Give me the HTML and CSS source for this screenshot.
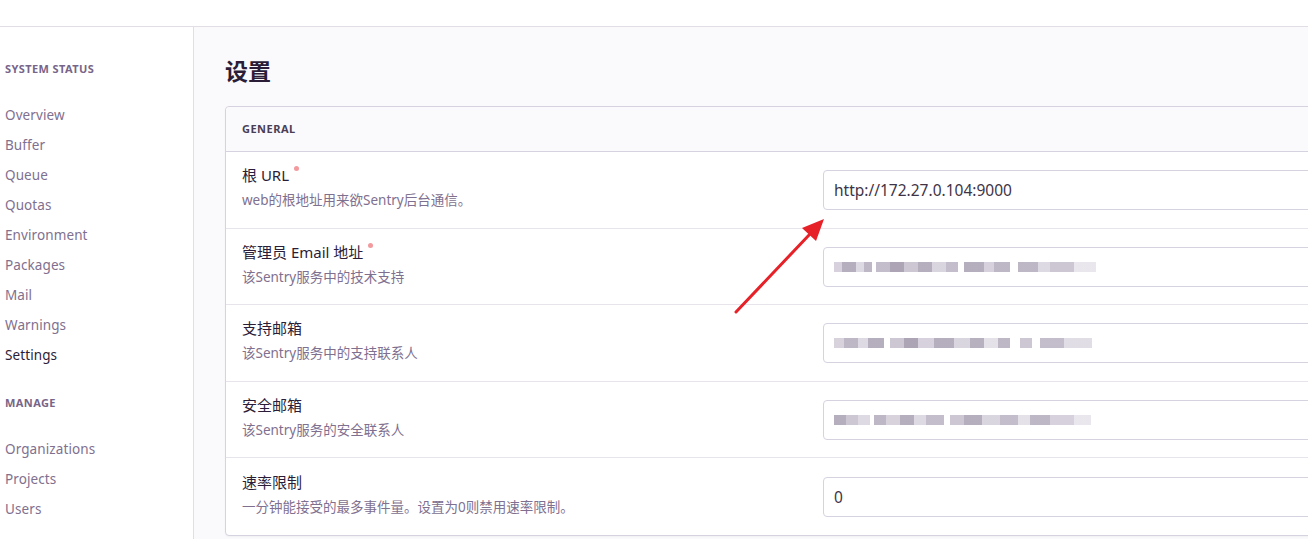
FILE: index.html
```html
<!DOCTYPE html>
<html lang="zh-CN">
  <head>
    <meta charset="UTF-8" />
    <title>设置</title>
    <link rel="stylesheet" href="styles.css">
  </head>
  <body>
    <div class="topbar"></div>

    <div class="layout">
      <!-- Sidebar -->
      <nav class="sidebar">
        <h6 class="nav-heading">System Status</h6>
        <a class="nav-item">Overview</a>
        <a class="nav-item">Buffer</a>
        <a class="nav-item">Queue</a>
        <a class="nav-item">Quotas</a>
        <a class="nav-item">Environment</a>
        <a class="nav-item">Packages</a>
        <a class="nav-item">Mail</a>
        <a class="nav-item">Warnings</a>
        <a class="nav-item active">Settings</a>

        <h6 class="nav-heading manage">Manage</h6>
        <a class="nav-item">Organizations</a>
        <a class="nav-item">Projects</a>
        <a class="nav-item">Users</a>
      </nav>

      <!-- Content -->
      <main class="content">
        <h1 class="page-title">设置</h1>

        <div class="panel">
          <div class="panel-header">General</div>

          <div class="field">
            <div class="field-label">
              <div class="label">根 URL <span class="required"></span></div>
              <div class="help">web的根地址用来欲Sentry后台通信。</div>
            </div>
            <div class="field-control">
              <div class="input">http://172.27.0.104:9000</div>
            </div>
          </div>

          <div class="field">
            <div class="field-label">
              <div class="label">管理员 Email 地址 <span class="required"></span></div>
              <div class="help">该Sentry服务中的技术支持</div>
            </div>
            <div class="field-control">
              <div class="input"><span class="mosaic m1"></span></div>
            </div>
          </div>

          <div class="field">
            <div class="field-label">
              <div class="label">支持邮箱</div>
              <div class="help">该Sentry服务中的支持联系人</div>
            </div>
            <div class="field-control">
              <div class="input"><span class="mosaic m2"></span></div>
            </div>
          </div>

          <div class="field">
            <div class="field-label">
              <div class="label">安全邮箱</div>
              <div class="help">该Sentry服务的安全联系人</div>
            </div>
            <div class="field-control">
              <div class="input"><span class="mosaic m3"></span></div>
            </div>
          </div>

          <div class="field">
            <div class="field-label">
              <div class="label">速率限制</div>
              <div class="help">一分钟能接受的最多事件量。设置为0则禁用速率限制。</div>
            </div>
            <div class="field-control">
              <div class="input">0</div>
            </div>
          </div>
        </div>
      </main>
    </div>

    <!-- annotation arrow -->
    <svg class="arrow" width="110" height="110" viewBox="0 0 110 110">
      <line x1="6" y1="102" x2="80" y2="24" stroke="#e62128" stroke-width="3" stroke-linecap="round" />
      <polygon points="94,9 72,18 86,31" fill="#e62128" />
    </svg>
  </body>
</html>
```

FILE: styles.css
```css
body {
  margin: 0;
  font-family: "Noto Sans", "Noto Sans CJK SC", sans-serif;
  color: #2b1d38;
  background: #faf9fb;
  overflow: hidden;
}

.topbar {
  height: 26px;
  background: #fff;
  border-bottom: 1px solid #e2dee6;
}

.layout {
  display: flex;
  min-height: 512px;
}

/* Sidebar */
.sidebar {
  width: 194px;
  flex-shrink: 0;
  background: #fff;
  border-right: 1px solid #e2dee6;
  padding: 34px 0 0 5px;
  box-sizing: border-box;
  display: flex;
  flex-direction: column;
}

.nav-heading {
  margin: 0 0 28px;
  font-size: 11px;
  letter-spacing: 0.4px;
  font-weight: 700;
  text-transform: uppercase;
  color: #776589;
  line-height: 16px;
}

.nav-heading.manage {
  margin-top: 20px;
}

.nav-item {
  font-size: 13.5px;
  letter-spacing: 0.1px;
  line-height: 20px;
  height: 30px;
  color: #80708f;
}

.nav-item.active {
  color: #2b1d38;
}

/* Content */
.content {
  flex: 1;
  padding: 30px 0 0 31px;
  min-width: 0;
}

.page-title {
  margin: 0 0 21px;
  font-size: 23px;
  line-height: 28px;
  font-weight: 700;
  color: #2b1d38;
}

.panel {
  width: 1200px;
  background: #fff;
  border: 1px solid #d6d2e0;
  border-radius: 4px;
  box-shadow: 0 1px 2px rgba(0, 0, 0, 0.04);
}

.panel-header {
  height: 44px;
  line-height: 44px;
  padding-left: 16px;
  background: #faf9fb;
  border-bottom: 1px solid #d6d2e0;
  border-radius: 4px 4px 0 0;
  font-size: 11px;
  letter-spacing: 0.5px;
  font-weight: 700;
  text-transform: uppercase;
  color: #4a3e56;
}

.field {
  display: flex;
  align-items: center;
  height: 76.6px;
  box-sizing: border-box;
  border-bottom: 1px solid #e7e4ec;
}

.field:last-child {
  border-bottom: none;
}

.field-label {
  width: 597px;
  flex-shrink: 0;
  padding: 0 0 5px 16px;
  box-sizing: border-box;
}

.label {
  font-size: 15px;
  line-height: 20px;
  color: #2b1d38;
}

.required {
  display: inline-block;
  width: 5px;
  height: 5px;
  margin-left: 1px;
  border-radius: 50%;
  background: #f39a9d;
  vertical-align: 10px;
}

.help {
  margin-top: 6px;
  font-size: 13.5px;
  line-height: 18px;
  color: #80708f;
}

.field-control {
  flex: 1;
  padding-top: 1px;
}

.input {
  height: 38px;
  line-height: 38px;
  border: 1px solid #d6d2e0;
  border-radius: 4px;
  padding-left: 10px;
  font-size: 15.5px;
  color: #3e3446;
  display: flex;
  align-items: center;
}

/* pixelated addresses */
.mosaic {
  display: block;
  height: 10px;
  opacity: 0.85;
}

.m1 {
  width: 262px;
  background: linear-gradient(90deg, #cfc9d6 0 8px, #a8a0b2 8px 22px, #d8d3de 22px 30px, #b2aabb 30px 38px, #fff 38px 42px, #b9b1c2 42px 56px, #9e95a8 56px 70px, #c4bdcb 70px 84px, #a8a0b2 84px 98px, #d3ced9 98px 112px, #b9b1c2 112px 124px, #fff 124px 130px, #a8a0b2 130px 150px, #cfc9d6 150px 160px, #b2aabb 160px 176px, #fff 176px 184px, #b2aabb 184px 204px, #d8d3de 204px 216px, #c4bdcb 216px 240px, #e6e2ea 240px 262px);
}

.m2 {
  width: 258px;
  background: linear-gradient(90deg, #d0cad6 0 10px, #b2aabb 10px 24px, #d8d3de 24px 34px, #a8a0b2 34px 50px, #fff 50px 56px, #c4bdcb 56px 70px, #9e95a8 70px 84px, #cfc9d6 84px 100px, #a8a0b2 100px 120px, #d3ced9 120px 136px, #aaa2b4 136px 150px, #e0dce5 150px 164px, #b2aabb 164px 176px, #fff 176px 186px, #c4bdcb 186px 198px, #fff 198px 206px, #b9b1c2 206px 230px, #dcd7e1 230px 258px);
}

.m3 {
  width: 257px;
  background: linear-gradient(90deg, #a8a0b2 0 12px, #c4bdcb 12px 24px, #d8d3de 24px 36px, #fff 36px 40px, #b2aabb 40px 52px, #d0cad6 52px 66px, #a8a0b2 66px 80px, #d8d3de 80px 92px, #b9b1c2 92px 110px, #fff 110px 116px, #c4bdcb 116px 130px, #a8a0b2 130px 148px, #d3ced9 148px 166px, #b9b1c2 166px 184px, #e0dce5 184px 196px, #b2aabb 196px 216px, #cfc9d6 216px 240px, #e6e2ea 240px 257px);
}

/* Annotation */
.arrow {
  position: absolute;
  left: 730px;
  top: 210px;
}
```
